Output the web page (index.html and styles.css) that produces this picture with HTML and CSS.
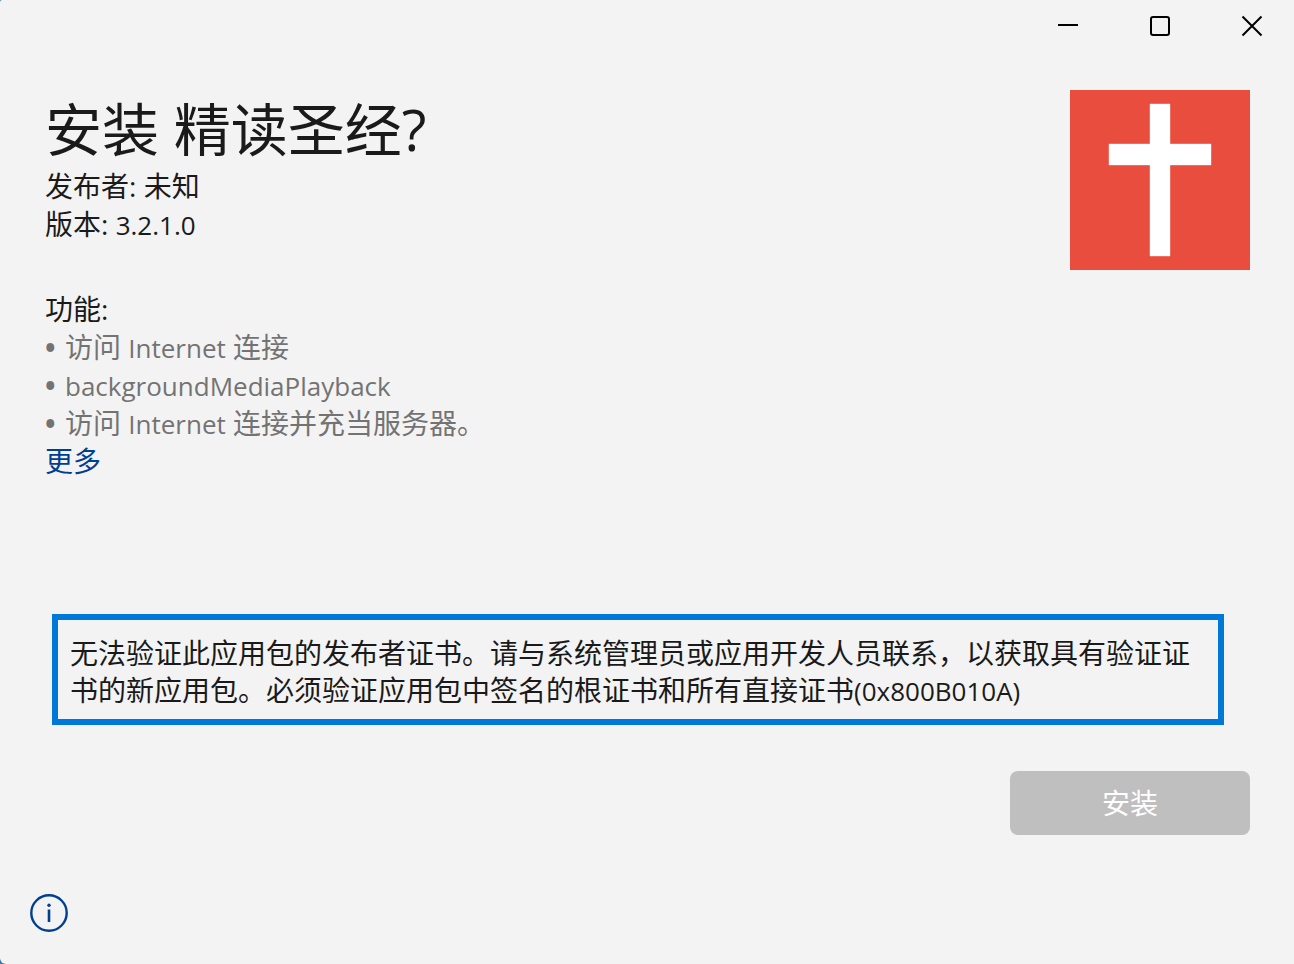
FILE: index.html
```html
<!DOCTYPE html>
<html lang="zh-CN">
<head>
  <meta charset="UTF-8" />
  <meta name="viewport" content="width=device-width, initial-scale=1.0" />
  <title>安装 精读圣经?</title>
  <link rel="stylesheet" href="styles.css">
</head>
<body>
  <div class="window">
    <div class="titlebar">
      <button type="button" aria-label="最小化">
        <svg width="22" height="22" viewBox="0 0 22 22"><path d="M1 10h20" /></svg>
      </button>
      <button type="button" aria-label="最大化">
        <svg width="22" height="22" viewBox="0 0 22 22"><rect x="2" y="2" width="18" height="18" rx="2" /></svg>
      </button>
      <button type="button" aria-label="关闭">
        <svg width="22" height="22" viewBox="0 0 22 22"><path d="M1.5 1.5l19 19M20.5 1.5l-19 19" /></svg>
      </button>
    </div>

    <main class="content">
      <div class="header">
        <div class="info">
          <h1>安装 精读圣经?</h1>
          <p>发布者: 未知</p>
          <p>版本: <span class="latin">3.2.1.0</span></p>
        </div>
        <svg class="logo" viewBox="0 0 180 180" role="img" aria-label="精读圣经">
          <rect width="180" height="180" fill="#e84d3d" />
          <path d="M80 14h20v40h41v21h-41v91H80V75H39V54h41z" fill="#fff" stroke="#fff" stroke-opacity=".4" />
        </svg>
      </div>

      <section class="features">
        <h2>功能:</h2>
        <ul>
          <li>访问 <span class="latin">Internet</span> 连接</li>
          <li><span class="latin">backgroundMediaPlayback</span></li>
          <li>访问 <span class="latin">Internet</span> 连接并充当服务器。</li>
        </ul>
        <a href="#">更多</a>
      </section>

      <div class="error" role="alert">无法验证此应用包的发布者证书。请与系统管理员或应用开发人员联系，以获取具有验证证书的新应用包。必须验证应用包中签名的根证书和所有直接证书<span class="latin">(0x800B010A)</span></div>

      <button type="button" class="install" disabled>安装</button>
    </main>

    <div class="footer">
      <button type="button" class="about" aria-label="关于">
        <svg width="38" height="38" viewBox="0 0 38 38">
          <circle cx="19" cy="19" r="17.7" fill="none" stroke="#003e92" stroke-width="2.4" />
          <path d="M19 15.5v12.5" stroke="#003e92" stroke-width="2.6" />
          <circle cx="19" cy="11.3" r="1.7" fill="#003e92" />
        </svg>
      </button>
    </div>
  </div>
</body>
</html>
```

FILE: styles.css
```css
* {
  box-sizing: border-box;
}
body {
  margin: 0;
  background: #3a76a8;
  color: #1a1a1a;
  font-family: "Open Sans", "Noto Sans CJK SC", sans-serif;
  font-size: 28px;
  line-height: 38px;
}
h1, h2, p, ul {
  margin: 0;
  padding: 0;
  font-weight: 400;
}
button {
  border: none;
  padding: 0;
  background: none;
  font: inherit;
}
.latin {
  font-size: 26px;
  line-height: 1;
}
.window {
  display: flex;
  flex-direction: column;
  min-height: 100vh;
  background: #f3f3f3;
  border-radius: 2px 0 0 6px;
}
.titlebar {
  display: flex;
  justify-content: flex-end;
  gap: 8px;
}
.titlebar button {
  display: flex;
  align-items: center;
  justify-content: center;
  width: 84px;
  height: 52px;
}
.titlebar svg {
  fill: none;
  stroke: #000;
  stroke-width: 2;
}
.content {
  display: flex;
  flex-direction: column;
  flex: 1;
  padding: 38px 44px 0 45px;
}
.header {
  display: flex;
  justify-content: space-between;
}
.info {
  padding-top: 2px;
}
.info h1 {
  font-size: 57px;
  line-height: 75px;
}
.logo {
  flex-shrink: 0;
  width: 180px;
  height: 180px;
}
.features {
  margin-top: 20px;
}
.features h2 {
  font-size: 28px;
}
.features ul {
  list-style: none;
  color: #737373;
}
.features li::before {
  content: "•";
  display: inline-block;
  width: 20px;
  font-weight: 700;
}
.features a {
  color: #003e92;
  text-decoration: none;
}
.error {
  margin: auto 26px 46px 7px;
  padding: 15px 12px 10px;
  border: 6px solid #0078d7;
  line-height: 37px;
}
.install {
  align-self: flex-end;
  width: 240px;
  height: 64px;
  border-radius: 8px;
  background: #bfbfbf;
  color: #fff;
}
.footer {
  padding: 59px 30px 32px;
}
.about {
  display: block;
}
.about svg {
  display: block;
}
```
